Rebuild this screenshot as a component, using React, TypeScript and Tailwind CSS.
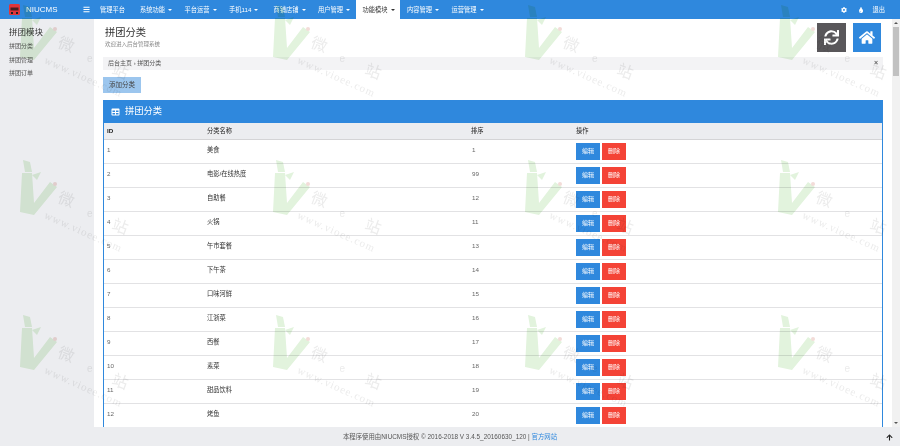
import React from 'react'
import { FaArrowUp, FaBars, FaCog, FaHome, FaSync, FaTable, FaTint } from 'react-icons/fa'

const navItems = [
  { label: '管理平台', caret: false },
  { label: '系统功能', caret: true },
  { label: '平台运营', caret: true },
  { label: '手机114', caret: true },
  { label: '商铺店铺', caret: true },
  { label: '用户管理', caret: true },
  { label: '功能模块', caret: true, active: true },
  { label: '内容管理', caret: true },
  { label: '运营管理', caret: true },
]

const rows = [
  { id: 1, name: '美食', sort: 1 },
  { id: 2, name: '电影/在线热度', sort: 99 },
  { id: 3, name: '自助餐', sort: 12 },
  { id: 4, name: '火锅', sort: 11 },
  { id: 5, name: '午市套餐', sort: 13 },
  { id: 6, name: '下午茶', sort: 14 },
  { id: 7, name: '口味河鲜', sort: 15 },
  { id: 8, name: '江浙菜', sort: 16 },
  { id: 9, name: '西餐', sort: 17 },
  { id: 10, name: '素菜', sort: 18 },
  { id: 11, name: '甜品饮料', sort: 19 },
  { id: 12, name: '烤鱼', sort: 20 },
]

const Caret = () => (
  <span className="ml-[3px] inline-block h-0 w-0 border-x-[2px] border-t-[2px] border-x-transparent border-t-current align-middle" />
)

const Watermark = () => (
  <div className="relative h-[155px] w-[252.5px]">
    <svg width="40" height="56" viewBox="0 0 40 56" className="absolute left-0 top-0">
      <path d="M2 13 L12 13 L14 43 L30 22 L37 27 L14 55 L0 52 Z" fill="#e2f3dd" />
      <path d="M3 0 L10 2 L12 12 L5 12 Z" fill="#e2f3dd" />
      <path d="M12 15 L21 12 L17 20 Z" fill="#e2f3dd" />
      <circle cx="35" cy="24" r="2" fill="#f3dcd8" />
    </svg>
    <span className="absolute left-[38px] top-[32px] rotate-[20deg] text-[16px] leading-none text-[#ececec]">微</span>
    <span className="absolute left-[67px] top-[49px] text-[10px] leading-none text-[#ececec]">e</span>
    <span className="absolute left-[92px] top-[59px] rotate-[20deg] text-[16px] leading-none text-[#ececec]">站</span>
    <span className="absolute left-[21px] top-[67px] w-[88px] rotate-[24deg] whitespace-nowrap font-['Liberation_Serif',serif] text-[11px] leading-none tracking-[1px] text-[#ececec]">
      www.vioee.com
    </span>
  </div>
)

export default function App() {
  return (
    <div className="relative flex h-[448px] w-[900px] flex-col overflow-hidden bg-white font-['Liberation_Sans','Noto_Sans_CJK_SC',sans-serif] text-[#333]">
      <header className="flex h-[19px] shrink-0 items-center bg-[#2f88dd] text-[6.25px] text-white">
        <div className="flex w-[83px] items-center pl-[9px]">
          <svg width="11" height="11" viewBox="0 0 11 11">
            <rect x="0" y="0" width="11" height="11" rx="1.5" fill="#e2343a" />
            <rect x="1.5" y="3.5" width="8" height="3" fill="#4a1f22" />
            <rect x="2" y="8" width="2" height="2" fill="#222" />
            <rect x="7" y="8" width="2" height="2" fill="#222" />
          </svg>
          <span className="ml-[6px] text-[8px]">NIUCMS</span>
        </div>
        <FaBars className="h-[7px] w-[7px]" />
        <nav className="ml-[3px] flex h-full">
          {navItems.map((item) => (
            <div
              key={item.label}
              className={`flex h-full items-center whitespace-nowrap pl-[7px] ${item.caret ? 'w-[44.5px]' : 'w-[40px]'} ${item.active ? 'bg-white text-[#333]' : ''}`}
            >
              {item.label}
              {item.caret && <Caret />}
            </div>
          ))}
        </nav>
        <div className="ml-auto flex items-center pr-[15px]">
          <FaCog className="h-[6px] w-[6px]" />
          <FaTint className="ml-[11px] h-[6px] w-[6px]" />
          <span className="ml-[9px]">退出</span>
        </div>
      </header>

      <div className="flex min-h-0 flex-1">
        <aside className="w-[94px] shrink-0 bg-[#ecedf0] pl-[9px] pt-[8px]">
          <div className="text-[8.5px] leading-[10px]">拼团模块</div>
          <ul className="mt-[6px] flex flex-col gap-[6.5px] text-[6px] leading-[7px] text-[#555]">
            <li>拼团分类</li>
            <li>拼团管理</li>
            <li>拼团订单</li>
          </ul>
        </aside>

        <main className="min-w-0 flex-1 overflow-hidden pl-[9px] pr-[9px]">
          <div className="flex h-[38px] justify-between pt-[4px]">
            <div className="pl-[2px] pt-[3px]">
              <h1 className="text-[10.25px] leading-[14px]">拼团分类</h1>
              <p className="mt-[1px] text-[5.5px] leading-[7px] text-[#888]">欢迎进入后台管理系统</p>
            </div>
            <div className="mr-[2px] flex gap-[7px]">
              <button className="flex h-[29px] w-[29px] items-center justify-center bg-[#59575a] text-white">
                <FaSync className="h-[15px] w-[15px]" />
              </button>
              <button className="flex h-[29px] w-[28px] items-center justify-center bg-[#2f88dd] text-white">
                <FaHome className="h-[15px] w-[16px]" />
              </button>
            </div>
          </div>

          <div className="flex h-[13px] items-center justify-between bg-[#f3f3f5] pl-[5px] pr-[5px] text-[6px] text-[#555]">
            <span>后台主页 › 拼团分类</span>
            <span className="text-[7px] font-bold text-[#666]">×</span>
          </div>

          <button className="mt-[7px] block h-[16px] w-[38px] bg-[#9cc6ee] text-[6.5px] text-[#444]">添加分类</button>

          <section className="mt-[7px] border-x border-[#2f88dd]">
            <div className="flex h-[23px] items-center bg-[#2f88dd] pl-[7px] text-[9.25px] text-white">
              <FaTable className="h-[8px] w-[9px]" />
              <span className="ml-[5px]">拼团分类</span>
            </div>
            <table className="w-full table-fixed border-collapse text-[6.25px]">
              <thead>
                <tr className="h-[16px] border-b border-[#d4d4d6] bg-[#ecedf0] text-left text-[#222]">
                  <th className="w-[100px] pl-[3px] font-bold">ID</th>
                  <th className="w-[264px] pl-[3px] font-normal">分类名称</th>
                  <th className="w-[105px] pl-[3px] font-normal">排序</th>
                  <th className="pl-[3px] font-normal">操作</th>
                </tr>
              </thead>
              <tbody>
                {rows.map((row) => (
                  <tr key={row.id} className="h-[24px] border-b border-[#e2e2e4] align-top">
                    <td className="pl-[3px] pt-[5px] text-[#666]">{row.id}</td>
                    <td className="pl-[3px] pt-[5px]">{row.name}</td>
                    <td className="pl-[4px] pt-[5px] text-[#666]">{row.sort}</td>
                    <td className="pl-[3px] pt-[3px]">
                      <div className="flex gap-[2px] text-white">
                        <button className="h-[17px] w-[24px] bg-[#2f88dd] text-[6px]">编辑</button>
                        <button className="h-[17px] w-[24px] bg-[#f44336] text-[6px]">删除</button>
                      </div>
                    </td>
                  </tr>
                ))}
              </tbody>
            </table>
          </section>
        </main>

        <div className="flex w-[8px] shrink-0 flex-col items-center bg-[#f1f1f1]">
          <div className="mb-[3px] mt-[3px] h-0 w-0 border-x-[2px] border-b-[2px] border-x-transparent border-b-[#555]" />
          <div className="h-[49px] w-[6px] bg-[#c1c1c1]" />
          <div className="mb-[3px] mt-auto h-0 w-0 border-x-[2px] border-t-[2px] border-x-transparent border-t-[#555]" />
        </div>
      </div>

      <footer className="relative flex h-[19px] shrink-0 items-center justify-center bg-[#ecedf0] text-[6.4px] text-[#555]">
        <span>
          本程序使用由NIUCMS授权 © 2016-2018 V 3.4.5_20160630_120 | <span className="text-[#2f88dd]">官方网站</span>
        </span>
        <FaArrowUp className="absolute right-[7px] top-[7px] h-[7px] w-[7px] text-[#222]" />
      </footer>
      <div className="h-[2px] shrink-0 bg-white" />

      {/* watermark tiles laid over the whole page */}
      <div className="pointer-events-none absolute inset-0 grid auto-rows-[155px] grid-cols-[repeat(4,252.5px)] overflow-hidden pl-[20px] pt-[5px] mix-blend-multiply">
        {Array.from({ length: 12 }).map((_, i) => (
          <Watermark key={i} />
        ))}
      </div>
    </div>
  )
}
